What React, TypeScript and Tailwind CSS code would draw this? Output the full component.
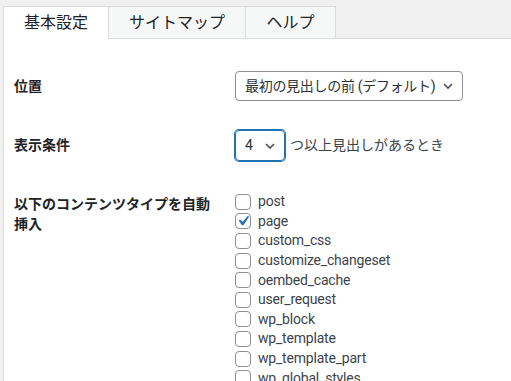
import { useState } from 'react';

const postTypes = [
  'post',
  'page',
  'custom_css',
  'customize_changeset',
  'oembed_cache',
  'user_request',
  'wp_block',
  'wp_template',
  'wp_template_part',
  'wp_global_styles',
];

const tabs = ['基本設定', 'サイトマップ', 'ヘルプ'];
const tabWidths = ['w-[106px]', 'w-[137px]', 'w-[90px]'];

function Chevron() {
  return (
    <svg width="16" height="16" viewBox="0 0 20 20" className="text-[#50575e] shrink-0">
      <path d="M5 7.5l5 5 5-5" fill="none" stroke="currentColor" strokeWidth="2.2" />
    </svg>
  );
}

export default function App() {
  const [active] = useState(0);
  const [checked, setChecked] = useState<string[]>(['page']);

  const toggle = (t: string) =>
    setChecked((c) => (c.includes(t) ? c.filter((x) => x !== t) : [...c, t]));

  return (
    <div className="h-screen overflow-hidden bg-[#f0f0f1] pt-[6px] pl-[3px] font-['Roboto','Noto_Sans_CJK_JP',sans-serif] text-[#1d2327]">
      {/* Tabs */}
      <div className="flex">
        {tabs.map((tab, i) => (
          <div
            key={tab}
            className={`${tabWidths[i]} h-[33px] flex items-center justify-center text-[16px] border-t border-r border-[#dcdcde] ${
              i === 0 ? 'border-l' : ''
            } ${i === active ? 'bg-white' : 'bg-[#f6f7f7] border-b'}`}
          >
            {tab}
          </div>
        ))}
        <div className="flex-1 border-b border-[#dcdcde]" />
      </div>

      {/* Panel */}
      <div className="bg-white border-l border-[#dcdcde] pl-[10px] pt-[32px] h-[400px]">
        <div className="flex items-center">
          <div className="w-[221px] text-[14px] font-semibold">位置</div>
          <div className="w-[228px] h-[30px] border border-[#8c8f94] rounded-[4px] flex items-center justify-between pl-[9px] pr-[6px] text-[14px] text-[#2c3338]">
            <span className="whitespace-nowrap tracking-[-0.3px]">最初の見出しの前 (デフォルト)</span>
            <Chevron />
          </div>
        </div>

        <div className="flex items-center mt-[29px]">
          <div className="w-[221px] text-[14px] font-semibold">表示条件</div>
          <div className="w-[50px] h-[31px] border border-[#2271b1] shadow-[0_0_0_1px_#2271b1] rounded-[4px] flex items-center justify-between pl-[9px] pr-[6px] text-[14px] text-[#2c3338]">
            <span>4</span>
            <Chevron />
          </div>
          <span className="ml-[5px] text-[14px] text-[#3c434a]">つ以上見出しがあるとき</span>
        </div>

        <div className="flex mt-[31px]">
          <div className="w-[221px] pr-[21px] pt-[3px] text-[14px] leading-[19.6px] font-semibold">
            以下のコンテンツタイプを自動挿入
          </div>
          <div className="flex flex-col">
            {postTypes.map((t) => (
              <label key={t} className="h-[19.6px] flex items-center gap-[7px] text-[14px] tracking-[-0.2px] text-[#3c434a] cursor-pointer">
                <span
                  onClick={() => toggle(t)}
                  className="w-[16px] h-[16px] border border-[#8c8f94] rounded-[4px] bg-white flex items-center justify-center shrink-0"
                >
                  {checked.includes(t) && (
                    <svg width="20" height="20" viewBox="0 0 20 20" className="shrink-0 -m-[3px]">
                      <path d="M14.83 4.89l1.34.94-5.81 8.38H9.02L5.78 9.67l1.34-1.25 2.57 2.4z" fill="#2271b1" />
                    </svg>
                  )}
                </span>
                {t}
              </label>
            ))}
          </div>
        </div>
      </div>
    </div>
  );
}
